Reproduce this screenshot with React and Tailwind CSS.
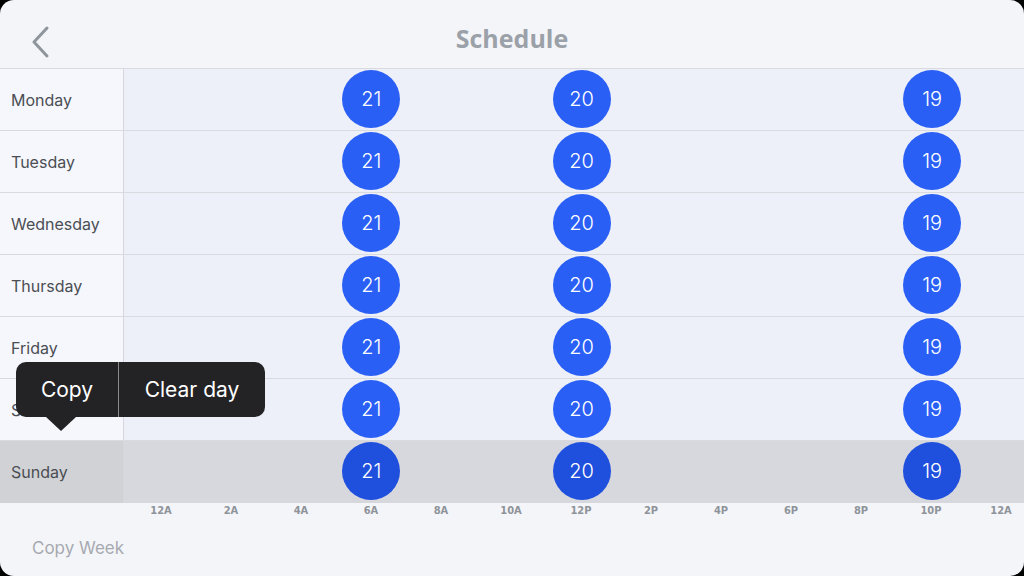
import React from "react";

const days = ["Monday", "Tuesday", "Wednesday", "Thursday", "Friday", "Saturday", "Sunday"];
const points = [
  { hour: 6, temp: 21 },
  { hour: 12, temp: 20 },
  { hour: 22, temp: 19 },
];
const ticks = ["12A", "2A", "4A", "6A", "8A", "10A", "12P", "2P", "4P", "6P", "8P", "10P", "12A"];

function ChevronLeft() {
  return (
    <svg width="22" height="34" viewBox="0 0 22 34" fill="none">
      <path d="M18 3 L5 17 L18 31" stroke="#8f959c" strokeWidth="3" strokeLinecap="round" strokeLinejoin="round" />
    </svg>
  );
}

function DayRow({ day, selected }) {
  return (
    <div className={`flex h-[62px] ${selected ? "" : "border-b border-[#d8dadf]"}`}>
      <div
        className={`w-[124px] shrink-0 flex items-center pl-[11px] border-r border-[#d5d7dc] text-[16px] text-[#4b4e53] ${
          selected ? "bg-[#d1d2d6]" : "bg-[#f5f7fd]"
        }`}
      >
        {day}
      </div>
      <div className={`relative flex-1 ${selected ? "bg-[#d6d8de]" : "bg-[#edf0f8]"}`}>
        {points.map((p) => (
          <div
            key={p.hour}
            className={`absolute top-[1px] w-[58px] h-[58px] rounded-full flex items-center justify-center text-white text-[20px] font-light ${
              selected ? "bg-[#1f4fdd]" : "bg-[#2a5ff6]"
            }`}
            style={{ left: 36 + p.hour * 35.05 - 29 + 1 }}
          >
            {p.temp}
          </div>
        ))}
      </div>
    </div>
  );
}

export default function App() {
  return (
    <div className="w-[1024px] h-[576px] bg-black" style={{ fontFamily: "Inter, 'Noto Sans', sans-serif" }}>
      <div className="relative w-full h-full rounded-[14px] bg-[#f4f5f9] overflow-hidden flex flex-col">
        <div className="relative h-[69px] shrink-0 border-b border-[#d8dadf] flex items-center justify-center pt-[10px]">
          <div className="absolute left-[29px] top-[25px]">
            <ChevronLeft />
          </div>
          <h1 className="text-[25px] font-bold text-[#9ba1a8]" style={{ fontFamily: "'Open Sans', 'Liberation Sans', sans-serif" }}>
            Schedule
          </h1>
        </div>

        <div className="flex flex-col">
          {days.map((d) => (
            <DayRow key={d} day={d} selected={d === "Sunday"} />
          ))}
        </div>

        <div
          className="flex pl-[126px] pt-[1px] text-[11px] font-bold text-[#8e939a] leading-[14px]"
          style={{ fontFamily: "'DejaVu Sans Condensed', 'Liberation Sans Narrow', 'Liberation Sans', sans-serif" }}
        >
          {ticks.map((t, i) => (
            <span key={i} className="w-[70px] shrink-0 text-center">
              {t}
            </span>
          ))}
        </div>

        <div className="flex-1 flex items-center pl-[32px] pt-[4px]">
          <span className="text-[17px] text-[#a6aab0]">Copy Week</span>
        </div>

        <div className="absolute left-[16px] top-[362px]">
          <div className="flex h-[55px] rounded-[10px] bg-[#232325] text-white text-[21px]">
            <button className="w-[103px] flex items-center justify-center border-r border-[#8a8a8d]">Copy</button>
            <button className="w-[146px] flex items-center justify-center">Clear day</button>
          </div>
          <div className="ml-[30px] w-0 h-0 border-l-[15px] border-r-[15px] border-t-[14px] border-l-transparent border-r-transparent border-t-[#232325]" />
        </div>
      </div>
    </div>
  );
}
